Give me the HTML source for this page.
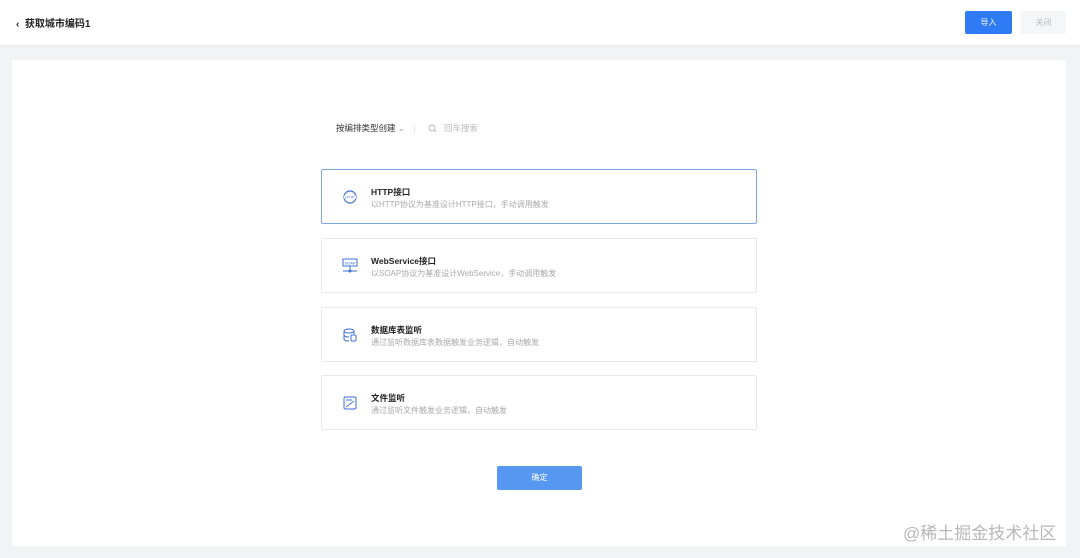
<!DOCTYPE html>
<html><head><meta charset="utf-8"><style>
*{margin:0;padding:0;box-sizing:border-box}
body{width:1080px;height:558px;background:#f2f3f5;font-family:"Liberation Sans","Noto Sans CJK SC",sans-serif;position:relative;overflow:hidden}
.hdr{position:absolute;left:0;top:0;width:1080px;height:45px;background:#fff;box-shadow:0 1px 4px rgba(0,0,0,.05)}
.title{position:absolute;left:16px;top:15px;font-size:10px;color:#222;font-weight:bold}
.btn1{position:absolute;left:965px;top:11px;width:47px;height:23px;background:#2f7bf5;color:#fff;font-size:8px;text-align:center;line-height:23px;border-radius:2px}
.btn2{position:absolute;left:1021px;top:11px;width:45px;height:23px;background:#f5f6f7;color:#bbb;font-size:8px;text-align:center;line-height:23px;border-radius:2px}
.panel{position:absolute;left:12px;top:60px;width:1054px;height:486px;background:#fff}
.sel{position:absolute;left:336px;top:122px;font-size:8.5px;color:#333}
.srch{position:absolute;left:444px;top:122px;font-size:8.5px;color:#bbb}
.card{position:absolute;left:321px;width:436px;height:55px;background:#fff;border:1px solid #e6e8eb;border-radius:2px}
.card.a{border-color:#7da6e6}
.card .ic{position:absolute;left:20px;top:19px;width:16px;height:16px}
.card .t{position:absolute;left:49px;top:16px;font-size:8.5px;font-weight:bold;color:#222}
.card .d{position:absolute;left:49px;top:29px;font-size:8px;color:#aaa}
.ok{position:absolute;left:497px;top:466px;width:85px;height:24px;background:#5697f2;color:#fff;font-size:8px;text-align:center;line-height:24px;border-radius:2px}
.wm{position:absolute;left:903px;top:519px;font-size:17px;color:#b8b8b8}
</style></head><body>
<div class="hdr">
<div class="title">&#8249;&nbsp; 获取城市编码1</div>
<div class="btn1">导入</div><div class="btn2">关闭</div>
</div>
<div class="panel"></div>
<div class="sel">按编排类型创建 <span style="color:#999">&#8964;</span> <span style="color:#ddd;margin-left:6px">|</span></div>
<svg style="position:absolute;left:428px;top:124px" width="9" height="9" viewBox="0 0 9 9"><circle cx="4" cy="4" r="3" fill="none" stroke="#bbb" stroke-width="1"/><path d="M6.2 6.2L8 8" stroke="#bbb"/></svg>
<div class="srch">回车搜索</div>
<div class="card a" style="top:169px"><svg class="ic" viewBox="0 0 16 16"><circle cx="8" cy="8" r="6" fill="none" stroke="#3d6fd6" stroke-width="1.2"/><rect x="2" y="6.5" width="12" height="3" fill="#fff"/><text x="8" y="9.3" font-size="3.5" text-anchor="middle" fill="#3d6fd6" font-family="Liberation Sans">HTTP</text></svg><div class="t">HTTP接口</div><div class="d">以HTTP协议为基准设计HTTP接口，手动调用触发</div></div>
<div class="card" style="top:238px"><svg class="ic" viewBox="0 0 16 16"><rect x="1" y="1" width="14" height="7" fill="none" stroke="#3d6fd6"/><text x="8" y="6.5" font-size="4" text-anchor="middle" fill="#3d6fd6" font-family="Liberation Sans">SOAP</text><path d="M8 8v5M1 13h14" stroke="#3d6fd6"/><circle cx="8" cy="13" r="1.5" fill="#3d6fd6"/></svg><div class="t">WebService接口</div><div class="d">以SOAP协议为基准设计WebService，手动调用触发</div></div>
<div class="card" style="top:307px"><svg class="ic" viewBox="0 0 16 16"><ellipse cx="7" cy="4" rx="5" ry="2" fill="none" stroke="#3d6fd6"/><path d="M2 4v8c0 1 2 2 5 2M12 4v3M2 8c0 1 2 2 5 2" fill="none" stroke="#3d6fd6"/><rect x="9" y="8" width="5" height="6" rx="1" fill="#fff" stroke="#3d6fd6"/></svg><div class="t">数据库表监听</div><div class="d">通过监听数据库表数据触发业务逻辑，自动触发</div></div>
<div class="card" style="top:375px"><svg class="ic" viewBox="0 0 16 16"><rect x="2" y="2" width="12" height="12" rx="1.5" fill="none" stroke="#3d6fd6"/><path d="M4 5h6M4 12l4-3 4-3" stroke="#3d6fd6" fill="none"/></svg><div class="t">文件监听</div><div class="d">通过监听文件触发业务逻辑，自动触发</div></div>
<div class="ok">确定</div>
<div class="wm">@稀土掘金技术社区</div>
</body></html>
